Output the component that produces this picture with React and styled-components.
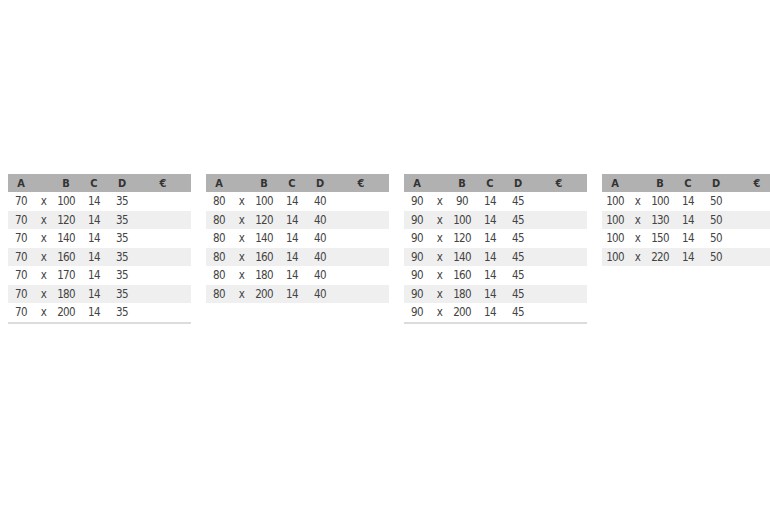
import React from 'react'
import styled, { createGlobalStyle } from 'styled-components'

const GlobalStyle = createGlobalStyle`
body {
    margin: 0;
    background: #ffffff;
    font-family: "DejaVu Sans Condensed", "Roboto", sans-serif;
}
`

const tables = [
    { a: 70, d: 35, bs: [100, 120, 140, 160, 170, 180, 200] },
    { a: 80, d: 40, bs: [100, 120, 140, 160, 180, 200] },
    { a: 90, d: 45, bs: [90, 100, 120, 140, 160, 180, 200] },
    { a: 100, d: 50, bs: [100, 130, 150, 220] },
]

const App = () => {
    return (
        <Page>
            <GlobalStyle />
            {tables.map((t) => (
                <Table key={t.a} underline={t.bs.length % 2 === 1}>
                    <Header>
                        <Cell>A</Cell>
                        <Cell></Cell>
                        <Cell>B</Cell>
                        <Cell>C</Cell>
                        <Cell>D</Cell>
                        <Cell>€</Cell>
                    </Header>
                    {t.bs.map((b, i) => (
                        <Row key={b} shaded={i % 2 === 1}>
                            <Cell>{t.a}</Cell>
                            <Cell>x</Cell>
                            <Cell>{b}</Cell>
                            <Cell>14</Cell>
                            <Cell>{t.d}</Cell>
                            <Cell></Cell>
                        </Row>
                    ))}
                </Table>
            ))}
        </Page>
    )
}

export default App

// the fourth table is cut off by the right edge, like the screenshot
const Page = styled.div`
display: flex;
align-items: flex-start;
gap: 15px;
padding: 174px 0 0 8px;
height: 346px;
overflow: hidden;
`
const Table = styled.div.withConfig({ shouldForwardProp: (p) => p !== 'underline' })`
width: 183px;
flex-shrink: 0;
border-bottom: ${({ underline }) => underline ? '2px solid #dcdcdc' : 'none'};
`
const Header = styled.div`
display: grid;
grid-template-columns: 26px 19px 26px 30px 26px 1fr;
height: 18px;
align-items: center;
background: #b1b1b1;
color: #333333;
font-weight: bold;
font-size: 11px;
`
const Row = styled.div.withConfig({ shouldForwardProp: (p) => p !== 'shaded' })`
display: grid;
grid-template-columns: 26px 19px 26px 30px 26px 1fr;
height: 18.5px;
align-items: center;
background: ${({ shaded }) => shaded ? '#efefef' : '#ffffff'};
color: #444444;
font-size: 11.5px;
letter-spacing: -0.7px;
`
const Cell = styled.span`
text-align: center;
white-space: nowrap;
`
